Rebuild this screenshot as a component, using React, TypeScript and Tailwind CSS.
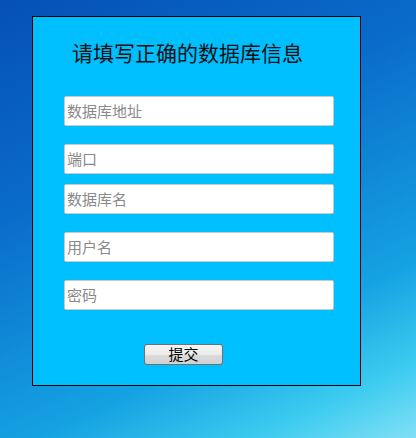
const FIELDS = [
  { placeholder: "数据库地址", gap: "mt-0" },
  { placeholder: "端口", gap: "mt-[18px]" },
  { placeholder: "数据库名", gap: "mt-[10px]" },
  { placeholder: "用户名", gap: "mt-[18px]" },
  { placeholder: "密码", gap: "mt-[18px]", type: "password" },
];

export default function App() {
  return (
    <div className="relative h-[438px] w-[416px] overflow-hidden bg-[linear-gradient(155deg,#0550b8_0%,#0a6cca_35%,#15a2e2_72%,#3ccbf0_88%,#82e0f6_100%)] font-['Liberation_Sans','Noto_Sans_CJK_SC',sans-serif]">
      <div className="ml-[32px] mt-[16px] flex h-[370px] w-[329px] flex-col border border-black bg-[#00bfff]">
        <h1 className="ml-[39px] mt-[24px] text-[21px] leading-[26px] font-normal text-[#111]">
          请填写正确的数据库信息
        </h1>
        <form
          className="ml-[31px] mt-[29px] flex flex-col"
          onSubmit={(e) => e.preventDefault()}
        >
          {FIELDS.map((field) => (
            <input
              className={`${field.gap} h-[30px] w-[270px] rounded-[2px] border border-[#c8c8c8] bg-white px-[2px] text-[15px] text-black outline-none placeholder:text-[#8a8a8a]`}
              key={field.placeholder}
              placeholder={field.placeholder}
              type={field.type ?? "text"}
            />
          ))}
          <button
            className="ml-[80px] mt-[34px] h-[21px] w-[79px] rounded-[3px] border border-[#707070] bg-[linear-gradient(#f4f4f4_0%,#ebebeb_50%,#dcdcdc_51%,#d0d0d0_100%)] text-[15px] leading-[19px] text-black"
            type="submit"
          >
            提交
          </button>
        </form>
      </div>
    </div>
  );
}
